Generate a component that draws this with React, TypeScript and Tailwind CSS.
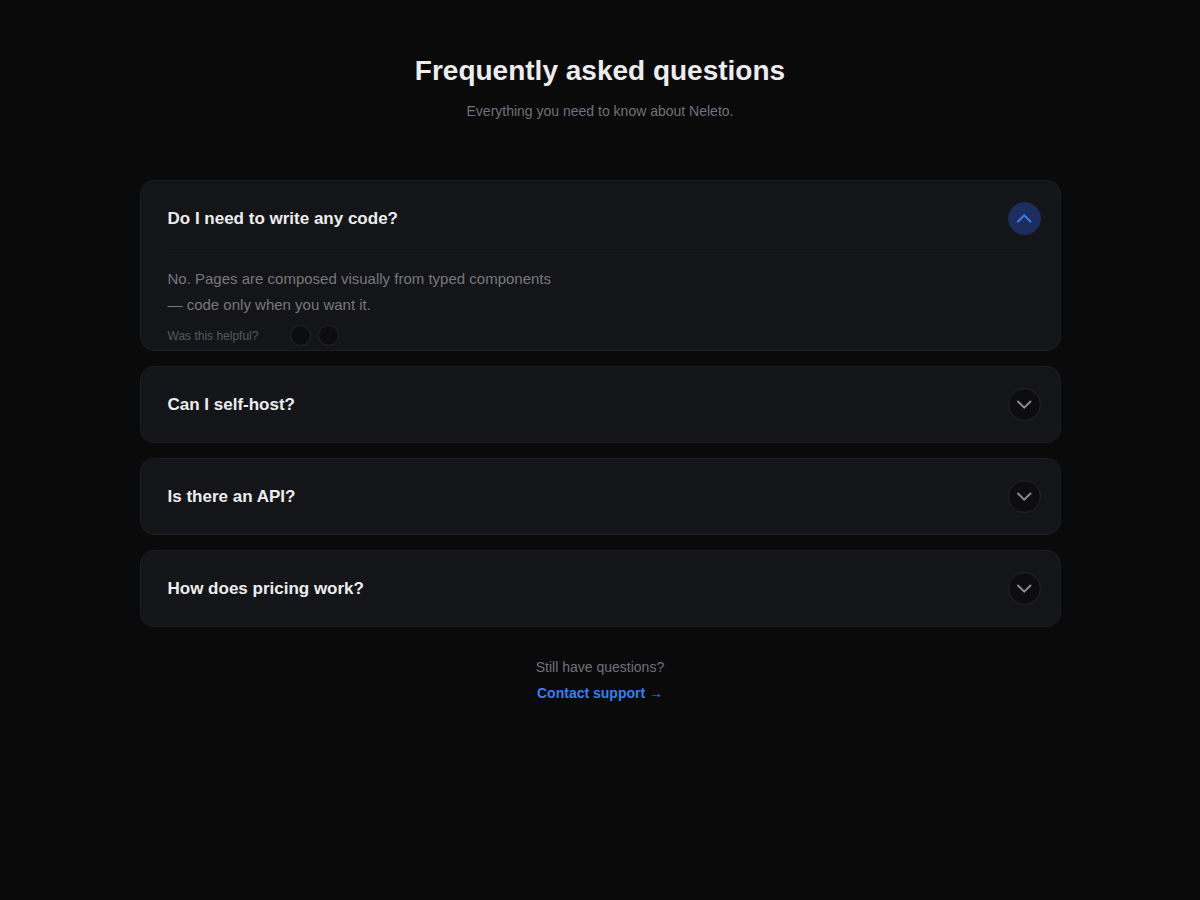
import { useState } from "react";

type FaqItem = {
  id: string;
  question: string;
  answer: string;
};

const FAQS: FaqItem[] = [
  {
    id: "code",
    question: "Do I need to write any code?",
    answer: "No. Pages are composed visually from typed components — code only when you want it.",
  },
  { id: "self-host", question: "Can I self-host?", answer: "" },
  { id: "api", question: "Is there an API?", answer: "" },
  { id: "pricing", question: "How does pricing work?", answer: "" },
];

function Chevron({ open }: { open: boolean }) {
  return (
    <svg
      viewBox="0 0 32 32"
      className="size-8 shrink-0"
      fill="none"
      stroke="currentColor"
      strokeWidth={2}
      strokeLinecap="round"
      strokeLinejoin="miter"
      aria-hidden="true"
    >
      <path d={open ? "M10 18.5l6.2-6.2 6.3 6.2" : "M10 12.5l6.2 6.2 6.3-6.2"} />
    </svg>
  );
}

function FaqCard({ item, open, onToggle }: { item: FaqItem; open: boolean; onToggle: () => void }) {
  return (
    <section className="overflow-hidden rounded-[14px] border border-[#1c1d21] bg-[#141519]">
      <h2>
        <button
          type="button"
          className="flex h-[75px] w-full items-center justify-between pr-[19px] pl-[27px] text-left text-[17px] font-bold text-[#ededef]"
          aria-expanded={open}
          aria-controls={`answer-${item.id}`}
          onClick={onToggle}
        >
          {item.question}
          <span
            className={`flex size-[33px] items-center justify-center rounded-full border ${
              open
                ? "border-[#1e2f5e] bg-[#1c2d5e] text-[#3b7ef0]"
                : "border-[#242528] bg-[#0d0d0f] text-[#8a8a90]"
            }`}
          >
            <Chevron open={open} />
          </span>
        </button>
      </h2>
      {open && item.answer && (
        <div id={`answer-${item.id}`} className="-mt-[5px] px-[27px] pb-1">
          <div className="border-t border-[#1a1b1f] pt-[14px]">
            <p className="max-w-[400px] text-[15px] leading-[26px] text-[#77777d]">{item.answer}</p>
            <div className="mt-[7px] flex items-center gap-[7px]">
              <span className="w-[115px] text-xs leading-4 text-[#57585d]">Was this helpful?</span>
              <button
                type="button"
                aria-label="Yes"
                className="size-[21px] rounded-full border border-[#242528] bg-[#0d0d0f]"
              />
              <button
                type="button"
                aria-label="No"
                className="size-[21px] rounded-full border border-[#242528] bg-[#0d0d0f]"
              />
            </div>
          </div>
        </div>
      )}
    </section>
  );
}

export default function App() {
  const [openId, setOpenId] = useState<string | null>("code");

  return (
    <main className="min-h-screen bg-[#0a0a0a] px-6 pt-[51px] pb-12 font-['Liberation_Sans',Arial,sans-serif]">
      <div className="mx-auto max-w-[921px]">
        <header className="text-center">
          <h1 className="text-[28px] leading-10 font-bold text-[#ededef]">Frequently asked questions</h1>
          <p className="mt-[10px] text-sm text-[#71717a]">Everything you need to know about Neleto.</p>
        </header>

        <div className="mt-[59px] space-y-[15px]">
          {FAQS.map((item) => (
            <FaqCard
              key={item.id}
              item={item}
              open={openId === item.id}
              onToggle={() => setOpenId(openId === item.id ? null : item.id)}
            />
          ))}
        </div>

        <footer className="mt-[27px] text-center text-sm leading-[26px]">
          <p className="text-[#71717a]">Still have questions?</p>
          <a href="#contact" className="font-bold text-[#3b7ef0]">
            Contact support →
          </a>
        </footer>
      </div>
    </main>
  );
}
